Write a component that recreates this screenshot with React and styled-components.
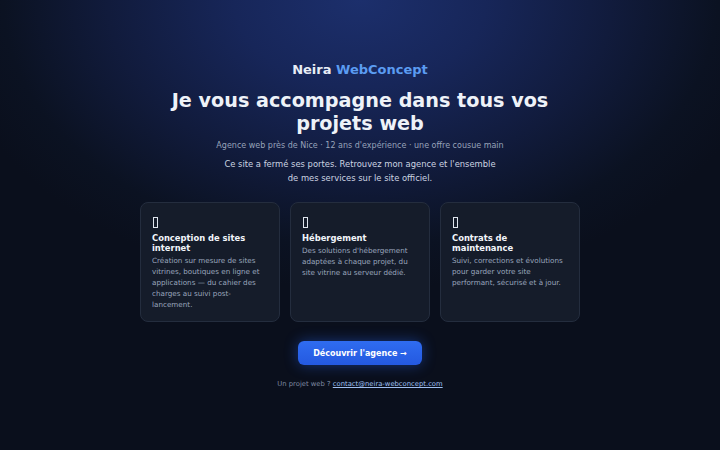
import React from "react";
import styled, { createGlobalStyle } from "styled-components";

const Global = createGlobalStyle`
  html, body { margin: 0; padding: 0; }
  body {
    font-family: "DejaVu Sans", "Noto Sans", sans-serif;
    background: #0a0f1c;
  }
`;

const Page = styled.div`
  min-height: 100vh;
  display: flex;
  align-items: center;
  justify-content: center;
  background:
    radial-gradient(ellipse 420px 290px at 50% 0%, #1c2f6c 0%, #172659 30%, #111b3c 60%, #0b1222 85%, #0a0f1c 100%),
    #0a0f1c;
`;

const Main = styled.main`
  width: 440px;
  display: flex;
  flex-direction: column;
  align-items: center;
  text-align: center;
`;

const Brand = styled.div`
  margin-top: 2px;
  font-size: 13px;
  font-weight: 700;
  color: #e8edf6;
  line-height: 16px;
`;

const Accent = styled.span`
  color: #5b9cf2;
`;

const Title = styled.h1`
  margin: 11px 0 0;
  font-size: 19.2px;
  line-height: 1.2;
  font-weight: 700;
  color: #eef2f8;
`;

const Tagline = styled.p`
  margin: 5px 0 0;
  font-size: 8px;
  line-height: 12px;
  color: #97a3ba;
`;

const Lead = styled.p`
  margin: 5px 0 0;
  max-width: 280px;
  font-size: 8.4px;
  line-height: 14.4px;
  color: #cdd5e2;
`;

const Cards = styled.div`
  margin-top: 17px;
  width: 100%;
  display: grid;
  grid-template-columns: repeat(3, 1fr);
  gap: 10px;
  text-align: left;
`;

const Card = styled.div`
  height: 120px;
  box-sizing: border-box;
  padding: 11px 11px;
  border: 1px solid #242d3e;
  border-radius: 8px;
  background: #151c2a;
`;

const IconRow = styled.div`
  height: 16px;
  display: flex;
  align-items: center;
`;

const Tofu = styled.span`
  display: block;
  width: 5px;
  height: 11px;
  margin-left: 1px;
  border: 1px solid #dfe5ee;
  box-sizing: border-box;
`;

const CardTitle = styled.h3`
  margin: 3px 0 0;
  font-size: 8.4px;
  line-height: 10px;
  font-weight: 700;
  color: #f2f5fa;
`;

const CardText = styled.p`
  margin: 3px 0 0;
  font-size: 7.2px;
  line-height: 10.8px;
  color: #9aa6bd;
`;

const Button = styled.a`
  margin-top: 19px;
  display: inline-flex;
  align-items: center;
  justify-content: center;
  height: 24px;
  padding: 0 15px;
  border-radius: 6px;
  background: linear-gradient(180deg, #2f6cf0, #2459e0);
  color: #ffffff;
  font-size: 8px;
  font-weight: 700;
  text-decoration: none;
  box-shadow: 0 0 14px rgba(37, 99, 235, 0.45);
`;

const Footer = styled.p`
  margin: 14px 0 0;
  font-size: 6.8px;
  line-height: 11px;
  color: #7e8aa1;
`;

const Mail = styled.a`
  color: #9fc0f2;
  text-decoration: underline;
`;

const services = [
  {
    title: "Conception de sites internet",
    text: "Création sur mesure de sites vitrines, boutiques en ligne et applications — du cahier des charges au suivi post-lancement.",
  },
  {
    title: "Hébergement",
    text: "Des solutions d'hébergement adaptées à chaque projet, du site vitrine au serveur dédié.",
  },
  {
    title: "Contrats de maintenance",
    text: "Suivi, corrections et évolutions pour garder votre site performant, sécurisé et à jour.",
  },
];

export default function App() {
  return (
    <>
      <Global />
      <Page>
        <Main>
          <Brand>
            Neira <Accent>WebConcept</Accent>
          </Brand>
          <Title>Je vous accompagne dans tous vos projets web</Title>
          <Tagline>Agence web près de Nice · 12 ans d'expérience · une offre cousue main</Tagline>
          <Lead>
            Ce site a fermé ses portes. Retrouvez mon agence et l'ensemble de mes services sur le site officiel.
          </Lead>
          <Cards>
            {services.map((s) => (
              <Card key={s.title}>
                <IconRow>
                  <Tofu />
                </IconRow>
                <CardTitle>{s.title}</CardTitle>
                <CardText>{s.text}</CardText>
              </Card>
            ))}
          </Cards>
          <Button href="#">Découvrir l'agence →</Button>
          <Footer>
            Un projet web ? <Mail href="#">contact@neira-webconcept.com</Mail>
          </Footer>
        </Main>
      </Page>
    </>
  );
}
